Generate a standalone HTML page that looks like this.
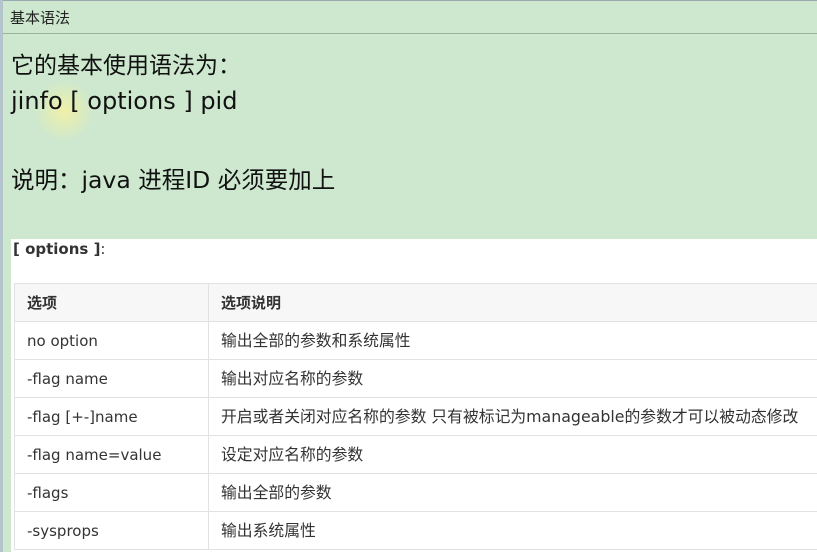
<!DOCTYPE html>
<html><head><meta charset="utf-8"><style>
*{margin:0;padding:0;box-sizing:border-box}
body{width:817px;height:552px;overflow:hidden;background:#cde8cf;font-family:"DejaVu Sans","Noto Sans CJK SC",sans-serif;position:relative}
.lb{position:absolute;left:0;top:0;width:3px;height:552px;background:#b4c4cc}
.top{position:absolute;left:0;top:0;width:817px;height:1px;background:#9aa9b0}
.title{position:absolute;left:10px;top:8px;font-size:15px;color:#222;font-family:"Noto Sans CJK SC",sans-serif;line-height:20px}
.hr{position:absolute;left:3px;top:33px;width:814px;height:1px;background:#98b49a}
.t{position:absolute;left:11px;color:#111;line-height:30px}
.white{position:absolute;left:11px;top:239px;width:806px;height:313px;background:#fff}
.opt{position:absolute;left:13px;top:240px;font-size:15px;color:#333}
table{position:absolute;left:14px;top:283px;border-collapse:collapse;font-size:15px;color:#333;width:830px}
td{border:1px solid #e2e2e2;height:38px;padding:0 12px;white-space:nowrap;line-height:20px;vertical-align:middle}
td:first-child{width:194px}
.c{font-size:15.8px}
tr.h td{background:#f7f7f7;font-weight:bold}
</style></head><body>
<div class="top"></div><div class="lb"></div>
<div class="title">基本语法</div>
<div class="hr"></div>
<div class="t" style="top:48px;font-size:23px;font-family:'Noto Sans CJK SC',sans-serif">它的基本使用语法为：</div>
<div style="position:absolute;left:33px;top:80px;width:62px;height:62px;border-radius:50%;background:radial-gradient(#f0f0a8,rgba(240,240,168,0) 70%)"></div>
<div class="t" style="top:86px;font-size:24px">jinfo [ options ] pid</div>
<div class="t" style="top:165px;font-size:23.5px">说明：java 进程ID 必须要加上</div>
<div class="white"></div>
<div class="opt"><b>[ options ]</b>:</div>
<table>
<tr class="h"><td>选项</td><td>选项说明</td></tr>
<tr><td>no option</td><td class="c">输出全部的参数和系统属性</td></tr>
<tr><td>-flag name</td><td class="c">输出对应名称的参数</td></tr>
<tr><td>-flag [+-]name</td><td class="c">开启或者关闭对应名称的参数 只有被标记为manageable的参数才可以被动态修改</td></tr>
<tr><td>-flag name=value</td><td class="c">设定对应名称的参数</td></tr>
<tr><td>-flags</td><td class="c">输出全部的参数</td></tr>
<tr><td>-sysprops</td><td class="c">输出系统属性</td></tr>
</table>
</body></html>
